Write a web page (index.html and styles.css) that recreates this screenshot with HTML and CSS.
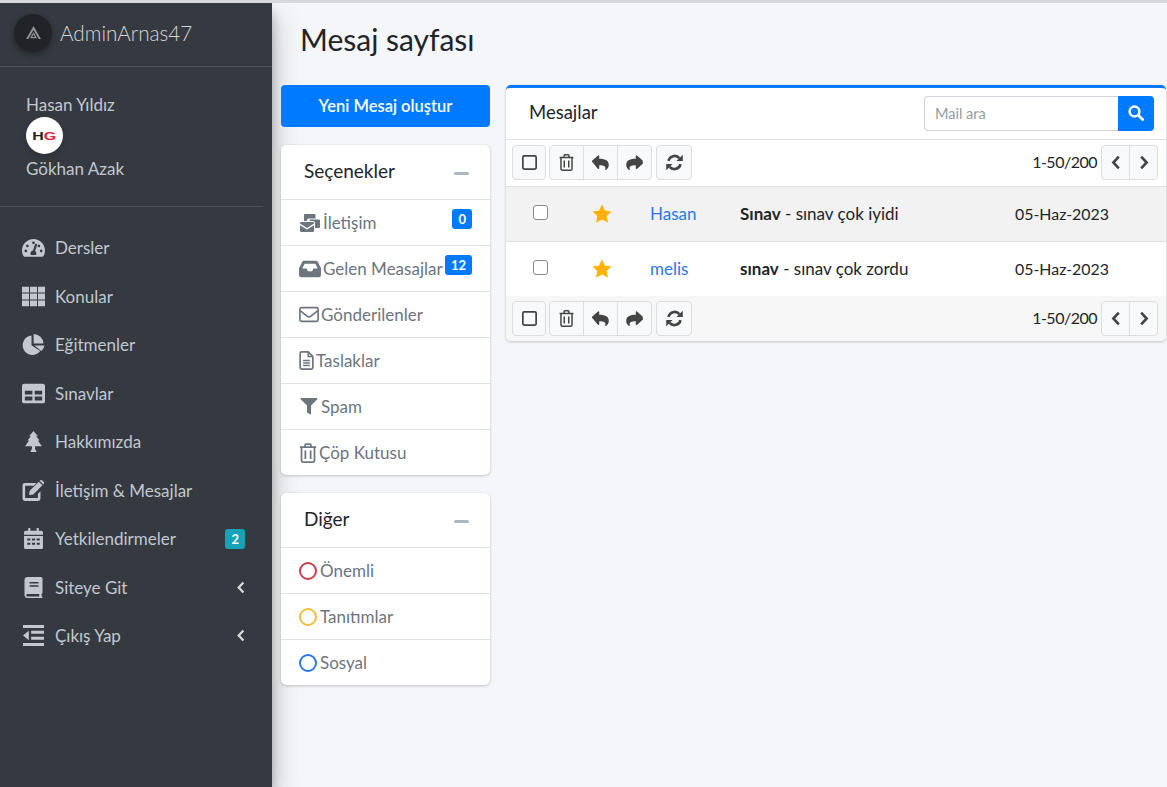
FILE: index.html
```html
<!DOCTYPE html>
<html lang="tr">

<head>
    <meta charset="utf-8">
    <title>Mesaj sayfası</title>
    <link rel="stylesheet" href="styles.css">
</head>

<body>
    <svg class="sprite" aria-hidden="true">
        <symbol id="i-gauge" viewBox="0 0 24 20"><path fill-rule="evenodd" d="M12 1C5.400 1 0 6.400 0 13c0 2.200.6 4.300 1.600 6 .2.400.7.600 1.100.600h18.600c.4 0 .9-.2 1.100-.6 1-1.700 1.600-3.800 1.600-6C24 6.400 18.600 1 12 1zm0 2.700a1.400 1.400 0 1 1 0 2.800 1.400 1.400 0 0 1 0-2.800zM4 15a1.400 1.400 0 1 1 0-2.800A1.400 1.400 0 0 1 4 15zm2-5.300A1.400 1.400 0 1 1 6 7a1.400 1.400 0 0 1 0 2.700zm8.800 8.100H9.200c-.3-.5-.4-1-.4-1.500 0-1.600 1.200-2.900 2.700-3.200l2-6.200a1.100 1.100 0 0 1 2.100.7l-2 6.100c.8.600 1.300 1.500 1.300 2.600 0 .5-.1 1-.1 1.500zM18 9.700A1.400 1.400 0 1 1 18 7a1.400 1.400 0 0 1 0 2.700zM20 15a1.400 1.400 0 1 1 0-2.800 1.400 1.400 0 0 1 0 2.800z"/></symbol>
        <symbol id="i-th" viewBox="0 0 21 18"><path d="M0 0h6.400v5.400H0zM7.300 0h6.400v5.400H7.300zM14.600 0H21v5.400h-6.400zM0 6.300h6.400v5.400H0zM7.300 6.300h6.400v5.400H7.300zM14.600 6.300H21v5.400h-6.400zM0 12.600h6.400V18H0zM7.300 12.600h6.400V18H7.300zM14.600 12.600H21V18h-6.400z"/></symbol>
        <symbol id="i-pie" viewBox="0 0 21 20"><path d="M8.600 1.400a9.300 9.300 0 1 0 8.300 14.900l-8.300-5.600z"/><path d="M10.600 0v9h9.400a9.400 9.400 0 0 0-9.400-9z"/><path d="M11.500 11l9.500 0a9.500 9.500 0 0 1-3.200 5.200z"/></symbol>
        <symbol id="i-table" viewBox="0 0 21 18"><path fill-rule="evenodd" d="M2 0h17a2 2 0 0 1 2 2v14a2 2 0 0 1-2 2H2a2 2 0 0 1-2-2V2a2 2 0 0 1 2-2zm.6 6.500V10h6.900V6.500zm9 0V10h6.800V6.500zm-9 5.300v3.500h6.900v-3.500zm9 0v3.500h6.800v-3.500z"/></symbol>
        <symbol id="i-tree" viewBox="0 0 16 20"><path d="M8 0l4.200 5h-1.700l3.300 4h-1.600L16 14.500H9.500V17l1.500 3H5l1.500-3v-2.500H0L3.800 9H2.200l3.300-4H3.800z"/></symbol>
        <symbol id="i-edit" viewBox="0 0 23 22"><path d="M14.500 3.200H2.500A2.500 2.500 0 0 0 0 5.700v13.800A2.500 2.500 0 0 0 2.500 22h13.800a2.500 2.500 0 0 0 2.500-2.500v-7.600l-2.700 2.700v4.200H2.700V5.900h9.100z"/><path d="M7.500 11.300L17 1.800l3.800 3.800-9.500 9.500-4.500.7zM18.200.6a1.800 1.800 0 0 1 2.500 0l1.300 1.300a1.800 1.800 0 0 1 0 2.500l-.3.300-3.800-3.800z"/></symbol>
        <symbol id="i-cal" viewBox="0 0 18 20"><path fill-rule="evenodd" d="M4 0h2v2.500h6V0h2v2.500h2.500A1.500 1.500 0 0 1 18 4v2.500H0V4a1.500 1.500 0 0 1 1.500-1.500H4zM0 7.500h18v11a1.500 1.500 0 0 1-1.500 1.500h-15A1.500 1.500 0 0 1 0 18.500zm3 2.500v2h3v-2zm4.500 0v2h3v-2zm4.500 0v2h3v-2zM3 14v2h3v-2zm4.500 0v2h3v-2zm4.500 0v2h3v-2z"/></symbol>
        <symbol id="i-book" viewBox="0 0 18 21"><path fill-rule="evenodd" d="M3 0h13.500A1.500 1.500 0 0 1 18 1.500v14c0 .6-.3 1.100-.8 1.300-.2.800-.2 1.700 0 2.400.5.200.8.700.8 1.300v.5H3a3 3 0 0 1-3-3V3a3 3 0 0 1 3-3zm2 5v1.500h9V5zm0 3.300v1.500h9V8.300zM3 17a1.250 1.250 0 0 0 0 2.500h11.800c-.1-.8-.1-1.700 0-2.500z"/></symbol>
        <symbol id="i-outdent" viewBox="0 0 18 18"><path d="M0 0h18v2.600H0zM7 5h11v2.600H7zM7 10h11v2.600H7zM0 15.400h18V18H0zM0 9l5-4v8z"/></symbol>
        <symbol id="i-bulk" viewBox="0 0 20 18"><path d="M5 0h9.500a1 1 0 0 1 1 1v3.500H9A2 2 0 0 0 7 6.500v.5H4V1a1 1 0 0 1 1-1z"/><path d="M10 5.500h9a1 1 0 0 1 1 1V13a1 1 0 0 1-1 1h-4V9a2 2 0 0 0-2-2h-3.500v-.5a1 1 0 0 1 .5-1z"/><path d="M1.200 8h11.600A1.200 1.200 0 0 1 14 9.200v.4l-7 4.400-7-4.400v-.4A1.200 1.200 0 0 1 1.200 8zM0 11.200l7 4.300 7-4.300v5.600a1.200 1.200 0 0 1-1.200 1.200H1.200A1.200 1.200 0 0 1 0 16.800z"/></symbol>
        <symbol id="i-inbox" viewBox="0 0 20 15"><path fill-rule="evenodd" d="M4.500 0h11c.6 0 1.200.4 1.500.9l3 6V13a2 2 0 0 1-2 2H2a2 2 0 0 1-2-2V6.900l3-6C3.300.4 3.900 0 4.500 0zm.6 2.700L3 7h4l1 2.500h4L13 7h4l-2.100-4.300z"/></symbol>
        <symbol id="i-env" viewBox="0 0 18 14"><rect x=".8" y=".8" width="16.400" height="12.400" rx="1.400" fill="none" stroke="currentColor" stroke-width="1.500"/><path d="M1 3.500l6.600 5.200c.9.700 1.900.700 2.800 0L17 3.500" fill="none" stroke="currentColor" stroke-width="1.500"/></symbol>
        <symbol id="i-file" viewBox="0 0 13 17"><path d="M8 .8H2.200A1.400 1.400 0 0 0 .8 2.200v12.600a1.400 1.400 0 0 0 1.400 1.400h8.600a1.400 1.400 0 0 0 1.400-1.400V5z" fill="none" stroke="currentColor" stroke-width="1.500"/><path d="M8 .8V5h4.200M3.500 8.500h6M3.500 10.800h6M3.500 13h6" fill="none" stroke="currentColor" stroke-width="1.300"/></symbol>
        <symbol id="i-filter" viewBox="0 0 18 18"><path d="M.8 0h16.400c.7 0 1 .8.600 1.300L11.200 8v8.600c0 .7-.7 1.100-1.300.7l-2.500-1.800c-.3-.2-.5-.5-.5-.8V8L.2 1.300C-.2.800.1 0 .8 0z"/></symbol>
        <symbol id="i-trash" viewBox="0 0 14 16"><path d="M.5 3.300h13M4.700 3V1.600c0-.5.300-.8.800-.8h3c.5 0 .8.300.8.800V3M1.800 3.500v10.700c0 .6.400 1 1 1h8.400c.6 0 1-.4 1-1V3.500M4.900 6v6.800M9.100 6v6.800" fill="none" stroke="currentColor" stroke-width="1.400"/></symbol>
        <symbol id="i-square" viewBox="0 0 14 14"><rect x=".8" y=".8" width="12.400" height="12.400" rx="1.200" fill="none" stroke="currentColor" stroke-width="1.600"/></symbol>
        <symbol id="i-reply" viewBox="0 0 16 14"><path d="M.3 5.200L5.700.4C6.100 0 6.800.3 6.800.9v2.600c4.800.1 9 1 9 5.800 0 1.900-1.200 3.800-2.600 4.700-.4.300-1 0-.8-.6.700-2.400-.3-3.700-5.600-3.800v2.900c0 .6-.7.900-1.100.5L.3 6.600a.9.900 0 0 1 0-1.400z"/></symbol>
        <symbol id="i-share" viewBox="0 0 16 14"><path d="M15.700 5.200L10.300.4C9.900 0 9.200.3 9.200.9v2.600c-4.800.1-9 1-9 5.800 0 1.900 1.200 3.800 2.600 4.700.4.300 1 0 .8-.6-.7-2.400.3-3.700 5.600-3.800v2.900c0 .6.700.9 1.100.5l5.400-4.800a.9.900 0 0 0 0-1.400z"/></symbol>
        <symbol id="i-sync" viewBox="0 0 16 16"><path d="M2.300 6.500a6 6 0 0 1 10.300-2.700" fill="none" stroke="currentColor" stroke-width="2.400"/><path d="M13.700 9.500a6 6 0 0 1-10.300 2.700" fill="none" stroke="currentColor" stroke-width="2.400"/><path d="M15.800.6v6h-6zM.2 15.400v-6h6z"/></symbol>
        <symbol id="i-search" viewBox="0 0 16 16"><circle cx="6.500" cy="6.500" r="4.900" fill="none" stroke="currentColor" stroke-width="2.500"/><path d="M10.300 10.300l4.300 4.300" fill="none" stroke="currentColor" stroke-width="2.800" stroke-linecap="round"/></symbol>
        <symbol id="i-left" viewBox="0 0 10 16"><path d="M8 1.800L2.200 8 8 14.200" fill="none" stroke="currentColor" stroke-width="2.800"/></symbol>
        <symbol id="i-right" viewBox="0 0 10 16"><path d="M2 1.800L7.800 8 2 14.200" fill="none" stroke="currentColor" stroke-width="2.800"/></symbol>
        <symbol id="i-star" viewBox="0 0 20 19"><path d="M10 .5l2.900 6 6.600.9-4.800 4.600 1.200 6.500L10 15.400l-5.900 3.100 1.200-6.500L.5 7.400l6.600-.9z"/></symbol>
    </svg>

    <div class="layout">
        <aside class="sidebar">
            <div class="brand">
                <span class="brand-logo">
                    <svg viewBox="0 0 16 14"><path d="M8 0L0 14h2.400L8 4.200 13.600 14H16zM8 6.500L4.200 13.200h7.600zm0 2.700l1.500 2.600h-3z" fill-rule="evenodd"/></svg>
                </span>
                <span class="brand-text">AdminArnas47</span>
            </div>
            <div class="user-panel">
                <div class="user-name">Hasan Yıldız</div>
                <div class="avatar"><span class="hg-text"><span class="hg-h">H</span><span class="hg-g">G</span></span></div>
                <div class="user-name">Gökhan Azak</div>
            </div>
            <nav class="side-nav">
                <a class="side-link"><svg class="side-icon"><use href="#i-gauge"/></svg>Dersler</a>
                <a class="side-link"><svg class="side-icon"><use href="#i-th"/></svg>Konular</a>
                <a class="side-link"><svg class="side-icon"><use href="#i-pie"/></svg>Eğitmenler</a>
                <a class="side-link"><svg class="side-icon"><use href="#i-table"/></svg>Sınavlar</a>
                <a class="side-link"><svg class="side-icon"><use href="#i-tree"/></svg>Hakkımızda</a>
                <a class="side-link"><svg class="side-icon"><use href="#i-edit"/></svg>İletişim &amp; Mesajlar</a>
                <a class="side-link"><svg class="side-icon"><use href="#i-cal"/></svg>Yetkilendirmeler<span class="side-badge">2</span></a>
                <a class="side-link"><svg class="side-icon"><use href="#i-book"/></svg>Siteye Git<svg class="side-arrow"><use href="#i-left"/></svg></a>
                <a class="side-link"><svg class="side-icon"><use href="#i-outdent"/></svg>Çıkış Yap<svg class="side-arrow"><use href="#i-left"/></svg></a>
            </nav>
        </aside>

        <main class="content">
            <h1 class="page-title">Mesaj sayfası</h1>
            <div class="columns">
                <div class="left-col">
                    <a class="new-btn">Yeni Mesaj oluştur</a>

                    <section class="card">
                        <header class="card-head">Seçenekler<span class="minus"></span></header>
                        <a class="folder"><svg class="fi fi-bulk"><use href="#i-bulk"/></svg>İletişim<span class="badge">0</span></a>
                        <a class="folder"><svg class="fi fi-bulk"><use href="#i-inbox"/></svg>Gelen Measajlar<span class="badge">12</span></a>
                        <a class="folder"><svg class="fi fi-env"><use href="#i-env"/></svg>Gönderilenler</a>
                        <a class="folder"><svg class="fi fi-file"><use href="#i-file"/></svg>Taslaklar</a>
                        <a class="folder"><svg class="fi fi-env"><use href="#i-filter"/></svg>Spam</a>
                        <a class="folder"><svg class="fi fi-trash"><use href="#i-trash"/></svg>Çöp Kutusu</a>
                    </section>

                    <section class="card">
                        <header class="card-head">Diğer<span class="minus"></span></header>
                        <a class="folder"><span class="ring ring-red"></span>Önemli</a>
                        <a class="folder"><span class="ring ring-yellow"></span>Tanıtımlar</a>
                        <a class="folder"><span class="ring ring-blue"></span>Sosyal</a>
                    </section>
                </div>

                <section class="mail-card">
                    <header class="mail-head">
                        <span class="mail-title">Mesajlar</span>
                        <div class="search">
                            <input class="search-input" placeholder="Mail ara">
                            <button class="search-btn"><svg><use href="#i-search"/></svg></button>
                        </div>
                    </header>
                    <div class="toolbar">
                        <button class="tool tool-check"><svg class="t-square"><use href="#i-square"/></svg></button>
                        <div class="tool-group">
                            <button class="tool"><svg class="t-trash"><use href="#i-trash"/></svg></button>
                            <button class="tool"><svg class="t-arrow"><use href="#i-reply"/></svg></button>
                            <button class="tool"><svg class="t-arrow"><use href="#i-share"/></svg></button>
                        </div>
                        <button class="tool tool-sync"><svg class="t-sync"><use href="#i-sync"/></svg></button>
                        <span class="pager-text">1-50/200</span>
                        <div class="tool-group">
                            <button class="tool tool-small"><svg class="t-chev"><use href="#i-left"/></svg></button>
                            <button class="tool tool-small"><svg class="t-chev"><use href="#i-right"/></svg></button>
                        </div>
                    </div>
                    <div class="mail-row mail-row-odd">
                        <span class="mail-check"></span>
                        <svg class="mail-star"><use href="#i-star"/></svg>
                        <a class="mail-from">Hasan</a>
                        <span class="mail-subject"><b>Sınav</b> - sınav çok iyidi</span>
                        <span class="mail-date">05-Haz-2023</span>
                    </div>
                    <div class="mail-row mail-row-last">
                        <span class="mail-check"></span>
                        <svg class="mail-star"><use href="#i-star"/></svg>
                        <a class="mail-from">melis</a>
                        <span class="mail-subject"><b>sınav</b> - sınav çok zordu</span>
                        <span class="mail-date">05-Haz-2023</span>
                    </div>
                    <div class="toolbar toolbar-foot">
                        <button class="tool tool-check"><svg class="t-square"><use href="#i-square"/></svg></button>
                        <div class="tool-group">
                            <button class="tool"><svg class="t-trash"><use href="#i-trash"/></svg></button>
                            <button class="tool"><svg class="t-arrow"><use href="#i-reply"/></svg></button>
                            <button class="tool"><svg class="t-arrow"><use href="#i-share"/></svg></button>
                        </div>
                        <button class="tool tool-sync"><svg class="t-sync"><use href="#i-sync"/></svg></button>
                        <span class="pager-text">1-50/200</span>
                        <div class="tool-group">
                            <button class="tool tool-small"><svg class="t-chev"><use href="#i-left"/></svg></button>
                            <button class="tool tool-small"><svg class="t-chev"><use href="#i-right"/></svg></button>
                        </div>
                    </div>
                </section>
            </div>
        </main>
    </div>
</body>

</html>
```

FILE: styles.css
```css
* {
    box-sizing: border-box;
}

body {
    margin: 0;
    height: 787px;
    overflow: hidden;
    font-family: "Lato", "Noto Sans", sans-serif;
    font-size: 17px;
    color: #212529;
    background: #f4f6f9;
    border-top: 3px solid #d6d8dc;
}

.sprite {
    display: none;
}

svg {
    fill: currentColor;
    flex: none;
}

.layout {
    display: flex;
    height: 784px;
}

/* sidebar */
.sidebar {
    width: 272px;
    flex: none;
    background: #343a40;
    color: #c2c7d0;
    box-shadow: 0 14px 28px rgba(0, 0, 0, .25), 0 10px 10px rgba(0, 0, 0, .22);
}

.brand {
    height: 64px;
    display: flex;
    align-items: center;
    gap: 8px;
    padding: 0 0 4px 14px;
    border-bottom: 1px solid #4b545c;
}

.brand-logo {
    width: 38px;
    height: 38px;
    border-radius: 50%;
    background: #212328;
    color: #8f9296;
    display: flex;
    align-items: center;
    justify-content: center;
    box-shadow: 0 3px 6px rgba(0, 0, 0, .35);
}

.brand-logo svg {
    width: 15px;
    height: 13px;
}

.brand-text {
    font-size: 20.7px;
    font-weight: 300;
    color: rgba(255, 255, 255, .8);
}

.user-panel {
    margin-right: 9px;
    height: 140px;
    padding: 27px 0 0 26px;
    border-bottom: 1px solid #4b545c;
}

.user-name {
    line-height: 22px;
}

.avatar {
    width: 37px;
    height: 37px;
    margin: 1px 0 4px;
    border-radius: 50%;
    background: #fff;
    display: flex;
    align-items: center;
    justify-content: center;
    box-shadow: 0 3px 6px rgba(0, 0, 0, .16);
}

.hg-text {
    font-family: "Liberation Sans", sans-serif;
    font-size: 11px;
    font-weight: 700;
    transform: scaleX(1.45);
}

.hg-h {
    color: #222;
}

.hg-g {
    color: #e3202a;
}

.side-nav {
    padding-top: 16.5px;
}

.side-link {
    height: 48.5px;
    display: flex;
    align-items: center;
    padding: 0 26px 0 22px;
}

.side-icon {
    width: 23px;
    height: 21px;
    margin-right: 10px;
}

.side-badge {
    margin-left: auto;
    margin-right: 1px;
    padding: 2px 6px;
    border-radius: 3px;
    background: #17a2b8;
    color: #fff;
    font-size: 13px;
    font-weight: 700;
}

.side-arrow {
    margin-left: auto;
    width: 10px;
    height: 13px;
    color: #d6d9de;
}

/* main area */
.content {
    flex: 1;
    min-width: 0;
    padding-left: 9px;
}

.page-title {
    margin: 0;
    height: 82px;
    padding: 18px 0 0 19px;
    font-size: 30px;
    font-weight: 400;
    line-height: 36px;
}

.columns {
    display: flex;
    align-items: flex-start;
    gap: 16px;
}

.left-col {
    width: 209px;
    flex: none;
}

.new-btn {
    display: flex;
    align-items: center;
    justify-content: center;
    height: 42px;
    margin-bottom: 18px;
    border-radius: 4px;
    background: #007bff;
    color: #fff;
    font-size: 16.5px;
    font-weight: 600;
}

.card {
    margin-bottom: 18px;
    border-radius: 5px;
    background: #fff;
    box-shadow: 0 0 1px rgba(0, 0, 0, .13), 0 1px 3px rgba(0, 0, 0, .2);
    overflow: hidden;
}

.card-head {
    height: 54px;
    display: flex;
    align-items: center;
    justify-content: space-between;
    padding: 0 21px 4px 23px;
    font-size: 19px;
}

.minus {
    width: 15px;
    height: 3px;
    margin-top: 6px;
    border-radius: 2px;
    background: #adb5bd;
}

.folder {
    height: 46px;
    display: flex;
    align-items: center;
    padding: 0 18px;
    border-top: 1px solid #dfe0e1;
    color: #6c757d;
    position: relative;
}

.fi {
    margin-right: 2px;
}

.fi-bulk {
    width: 22px;
    height: 18px;
}

.fi-env {
    width: 20px;
    height: 17px;
}

.fi-file {
    width: 15px;
    height: 19px;
}

.fi-trash {
    width: 18px;
    height: 20px;
}

.badge {
    position: absolute;
    top: 9px;
    right: 18px;
    padding: 2px 6px;
    border-radius: 3px;
    background: #007bff;
    color: #fff;
    font-size: 13px;
    font-weight: 700;
}

.ring {
    width: 18px;
    height: 18px;
    margin-right: 3px;
    border: 2px solid;
    border-radius: 50%;
}

.ring-red {
    border-color: #c8404d;
}

.ring-yellow {
    border-color: #f3bd3d;
}

.ring-blue {
    border-color: #2a78e4;
}

.mail-card {
    width: 660px;
    flex: none;
    border-top: 3px solid #007bff;
    border-radius: 5px;
    background: #fff;
    box-shadow: 0 0 1px rgba(0, 0, 0, .13), 0 1px 3px rgba(0, 0, 0, .2);
    overflow: hidden;
}

.mail-head {
    height: 52px;
    display: flex;
    align-items: center;
    justify-content: space-between;
    padding: 0 12px 0 23px;
    border-bottom: 1px solid #dfe0e1;
}

.mail-title {
    font-size: 18.5px;
    margin-top: -4px;
}

.search {
    display: flex;
    margin-top: -1px;
}

.search-input {
    width: 194px;
    height: 35px;
    padding: 0 10px;
    border: 1px solid #ced4da;
    border-right: 0;
    border-radius: 4px 0 0 4px;
    font: inherit;
    font-size: 14.5px;
    outline: none;
}

.search-input::placeholder {
    color: #939ba2;
}

.search-btn {
    width: 36px;
    height: 35px;
    padding: 0;
    border: 0;
    border-radius: 0 4px 4px 0;
    background: #007bff;
    color: #fff;
    display: flex;
    align-items: center;
    justify-content: center;
}

.search-btn svg {
    width: 16px;
    height: 16px;
}

.toolbar {
    height: 47px;
    display: flex;
    align-items: center;
    gap: 3px;
    padding: 0 7px 1px 6px;
    border-bottom: 1px solid #dfe0e1;
}

.toolbar-foot {
    height: 45px;
    padding-bottom: 0;
    border-bottom: 0;
    background: #f7f7f7;
}

.tool {
    width: 35px;
    height: 35px;
    padding: 0;
    border: 1px solid #ddd;
    border-radius: 4px;
    background: #f8f9fa;
    color: #444;
    display: flex;
    align-items: center;
    justify-content: center;
}

.tool-check {
    width: 34px;
}

.tool-sync {
    width: 36px;
}

.tool-small {
    width: 29px;
}

.tool-group {
    display: flex;
    margin-right: 1px;
}

.tool-group .tool {
    border-radius: 0;
    margin-left: -1px;
}

.tool-group .tool:first-child {
    border-radius: 4px 0 0 4px;
    margin-left: 0;
}

.tool-group .tool:last-child {
    border-radius: 0 4px 4px 0;
}

.t-square {
    width: 15px;
    height: 15px;
}

.t-trash {
    width: 15px;
    height: 17px;
}

.t-arrow {
    width: 17px;
    height: 15px;
}

.t-sync {
    width: 17px;
    height: 17px;
}

.t-chev {
    width: 10px;
    height: 15px;
}

.pager-text {
    margin: -3px 1px 0 auto;
    font-size: 16px;
    letter-spacing: -.5px;
}

.mail-row {
    height: 55px;
    padding-bottom: 1px;
    display: grid;
    grid-template-columns: 60px 84px 90px 275px auto;
    align-items: center;
    border-bottom: 1px solid #dfe0e1;
}

.mail-row-last {
    height: 54px;
    border-bottom: 0;
}

.mail-row-odd {
    background: #f2f2f2;
}

.mail-check {
    width: 15px;
    height: 15px;
    margin: -2px 0 0 27px;
    border: 1px solid #8a8a8a;
    border-radius: 3px;
    background: #fff;
}

.mail-star {
    width: 20px;
    height: 19px;
    margin-left: 26px;
    color: #ffb300;
}

.mail-from {
    color: #2a78e4;
}

.mail-subject b {
    font-weight: 700;
}

.mail-date {
    font-size: 15.9px;
}
```
